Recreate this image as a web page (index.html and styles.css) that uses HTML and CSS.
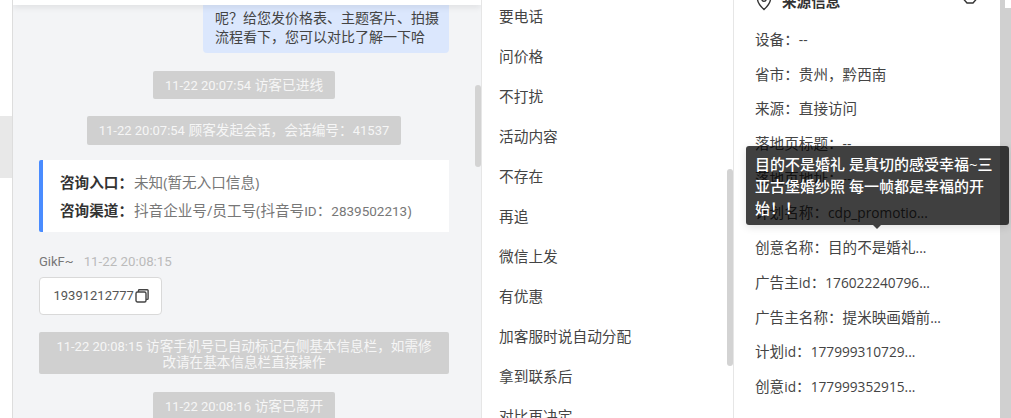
FILE: index.html
```html
<!DOCTYPE html>
<html lang="zh">
<head>
<meta charset="utf-8">
<title>会话</title>
<link rel="stylesheet" href="styles.css">
</head>
<body>
<div class="app">
  <aside class="edge"><div class="edge-item"></div></aside>
  <section class="chat">
    <div class="chat-top"></div>
    <div class="chat-body">
      <div class="bubble">呢&#xFF1F;给您发价格表、主题客片、拍摄流程看下&#xFF0C;您可以对比了解一下哈</div>
      <div class="sys s1"><span class="n">11-22 20:07:54</span> 访客已进线</div>
      <div class="sys s2"><span class="n">11-22 20:07:54</span> 顾客发起会话&#xFF0C;会话编号&#xFF1A;<span class="n">41537</span></div>
      <div class="card">
        <div class="card-row"><b>咨询入口&#xFF1A;</b><span>未知(暂无入口信息)</span></div>
        <div class="card-row"><b>咨询渠道&#xFF1A;</b><span>抖音企业号/员工号(抖音号<span class="n">ID</span>&#xFF1A;<span class="n">2839502213</span>)</span></div>
      </div>
      <div class="meta"><span class="who">GikF~</span><span class="when">11-22 20:08:15</span></div>
      <div class="msg"><span class="n">19391212777</span><svg class="copy" width="14" height="14" viewBox="0 0 14 14" fill="none" stroke="#444" stroke-width="1.4"><rect x="1" y="3" width="10" height="10" rx="1.5"/><path d="M3.5 3V1.500A.8.8 0 0 1 4.300.8h8a.8.8 0 0 1 .8.8v8a.8.8 0 0 1-.8.8H11"/></svg></div>
      <div class="sys wide"><span class="n">11-22 20:08:15</span> 访客手机号已自动标记右侧基本信息栏&#xFF0C;如需修改请在基本信息栏直接操作</div>
      <div class="sys s1"><span class="n">11-22 20:08:16</span> 访客已离开</div>
    </div>
    <div class="thumb chat-thumb"></div>
  </section>
  <section class="menu">
    <div class="menu-item">要电话</div>
    <div class="menu-item">问价格</div>
    <div class="menu-item">不打扰</div>
    <div class="menu-item">活动内容</div>
    <div class="menu-item">不存在</div>
    <div class="menu-item">再追</div>
    <div class="menu-item">微信上发</div>
    <div class="menu-item">有优惠</div>
    <div class="menu-item">加客服时说自动分配</div>
    <div class="menu-item">拿到联系后</div>
    <div class="menu-item">对比再决定</div>
    <div class="thumb menu-thumb"></div>
  </section>
  <section class="info">
    <header class="info-head">
      <svg class="info-pin" width="16" height="20" viewBox="0 0 16 20" fill="none" stroke="#333" stroke-width="1.4"><path d="M8 18.600C4 14.800 1.500 11.600 1.500 8a6.500 6.500 0 0 1 13 0c0 3.600-2.500 6.800-6.500 10.600Z"/><circle cx="8" cy="8" r="2.200"/></svg>
      <span class="info-title">来源信息</span>
      <svg class="info-edit" width="16" height="20" viewBox="0 0 16 20" fill="none" stroke="#333" stroke-width="1.4"><path d="M8 .8 14.500 4.500v5.500L11 14H5L1.500 10V4.500Z"/><circle cx="8" cy="8" r="2.200"/></svg>
    </header>
    <div class="info-row">设备&#xFF1A;<span class="l">--</span></div>
    <div class="info-row">省市&#xFF1A;贵州&#xFF0C;黔西南</div>
    <div class="info-row">来源&#xFF1A;直接访问</div>
    <div class="info-row">落地页标题&#xFF1A;<span class="l">--</span></div>
    <div class="info-row">落地页地址&#xFF1A;<span class="l">--</span></div>
    <div class="info-row">计划名称&#xFF1A;<span class="l">cdp_promotio...</span></div>
    <div class="info-row">创意名称&#xFF1A;目的不是婚礼<span class="l">...</span></div>
    <div class="info-row">广告主<span class="l">id</span>&#xFF1A;<span class="l">176022240796...</span></div>
    <div class="info-row">广告主名称&#xFF1A;提米映画婚前<span class="l">...</span></div>
    <div class="info-row">计划<span class="l">id</span>&#xFF1A;<span class="l">177999310729...</span></div>
    <div class="info-row">创意<span class="l">id</span>&#xFF1A;<span class="l">177999352915...</span></div>
  </section>
  <div class="track"></div>
  <div class="tooltip">目的不是婚礼 是真切的感受幸福~三亚古堡婚纱照 每一帧都是幸福的开始&#xFF01;&#xFF01;</div>
</div>
</body>
</html>
```

FILE: styles.css
```css
* { box-sizing: border-box; }
html, body { margin: 0; height: 100%; overflow: hidden; background: #fff; }
body { font: 14px/20px "Open Sans", "Noto Sans CJK SC", sans-serif; color: #333; }
.app { position: relative; display: flex; width: 1011px; height: 418px; overflow: hidden; }

.edge { width: 12px; flex: none; padding-top: 116px; background: #fff; }
.edge-item { height: 62px; background: #e8e8e8; }

.chat { position: relative; width: 470px; flex: none; background: #f3f4f6; border-left: 1px solid #ddd; border-right: 1px solid #e6e6e6; overflow: hidden; }
.chat-top { position: relative; height: 5px; background: #fff; box-shadow: 0 2px 6px rgba(0, 0, 0, .1); }
.chat-body { display: flex; flex-direction: column; align-items: center; padding: 0 32px 0 26px; }
.n { font-family: Roboto, sans-serif; font-size: 13px; }
.bubble { align-self: flex-end; width: 246px; height: 48px; padding: 3px 8px 0 12px; color: #444; background: #dbe7fd; border-radius: 0 0 4px 4px; line-height: 19px; }
.sys { margin-top: 18px; padding: 0 11.500px; height: 28px; line-height: 28px; font-size: 13.700px; color: #f6f6f6; background: #d0d0d0; border-radius: 2px; text-align: center; white-space: nowrap; }
.s2 { height: 29px; margin-top: 17px; }
.card { align-self: stretch; height: 72px; margin-top: 15px; padding: 12px 0 0 17px; background: #fff; border-left: 4px solid #4a8cff; border-radius: 2px 0 0 2px; }
.card-row { display: flex; height: 28px; line-height: 20px; font-size: 14.600px; color: #777; white-space: nowrap; }
.card-row b { margin-right: 1px; color: #333; font-weight: 700; }
.card-row .n { font-size: 13.500px; }
.meta { align-self: stretch; margin-top: 20px; height: 20px; color: #777; font-family: Roboto, sans-serif; font-size: 13px; }
.when { margin-left: 10px; color: #bbb; font-size: 13.300px; }
.msg { align-self: flex-start; display: flex; align-items: center; width: 123px; height: 38px; margin-top: 5px; padding-left: 13.500px; color: #555; background: #fff; border: 1px solid #d9d9d9; border-radius: 4px; }
.copy { flex: none; margin-left: 1px; }
.sys.wide { align-self: stretch; height: 42px; margin-top: 17px; padding: 6px 14px 0; line-height: 15px; font-size: 13.600px; white-space: normal; }

.thumb { position: absolute; width: 6px; background: #d3d3d3; border-radius: 3px; }
.chat-thumb { top: 85px; right: 0; height: 82px; }

.menu { position: relative; width: 252px; flex: none; background: #fff; border-right: 1px solid #e6e6e6; font-size: 14.700px; overflow: hidden; }
.menu-item { height: 40px; padding-left: 17px; line-height: 33px; color: #444; white-space: nowrap; }
.menu-thumb { top: 169px; right: 0; height: 197px; }

.info { width: 266px; flex: none; padding-left: 21px; background: #fff; font-size: 14.600px; overflow: hidden; }
.info-head { display: flex; align-items: center; gap: 10px; height: 20px; margin: -9px 0 18px; padding-right: 22px; }
.info-pin { margin-left: 1px; }
.info-title { font-weight: 700; }
.info-edit { margin: -4px 0 0 auto; }
.info-row { height: 34.700px; line-height: 21px; color: #444; white-space: nowrap; }
.l { font-size: 13.700px; }

.track { flex: 1; background: linear-gradient(#d0d0d0, #d0d0d0) left top / 5px 100% no-repeat, linear-gradient(#d0d0d0, #d0d0d0) left 8px / 100% 100% no-repeat; }

.tooltip { position: absolute; left: 746px; top: 146px; width: 263px; height: 79px; padding: 7px 9px; color: #fff; font-size: 15px; font-weight: 500; line-height: 22px; background: rgba(0, 0, 0, .75); border-radius: 3px; box-shadow: 0 2px 8px rgba(0, 0, 0, .12); }
.tooltip::after { content: ""; position: absolute; left: 127px; top: 79px; border: 4px solid transparent; border-top-color: #404040; border-bottom: 0; }
```
